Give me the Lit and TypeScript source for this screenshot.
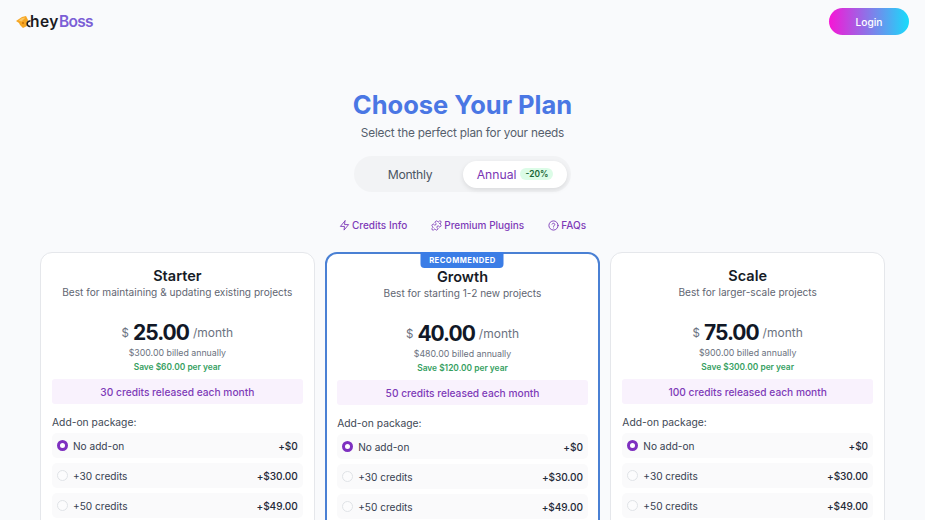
import { LitElement, html, css, svg } from "lit";
import { customElement } from "lit/decorators.js";

const PLANS = [
  { name: "Starter", desc: "Best for maintaining & updating existing projects", price: "25.00", billed: "$300.00", save: "$60.00", credits: 30, rec: false },
  { name: "Growth", desc: "Best for starting 1-2 new projects", price: "40.00", billed: "$480.00", save: "$120.00", credits: 50, rec: true },
  { name: "Scale", desc: "Best for larger-scale projects", price: "75.00", billed: "$900.00", save: "$300.00", credits: 100, rec: false },
];
const ADDONS = [
  { label: "No add-on", price: "+$0", on: true },
  { label: "+30 credits", price: "+$30.00", on: false },
  { label: "+50 credits", price: "+$49.00", on: false },
];
const PUZZLE =
  "M19.439 7.85c-.049.322.059.648.289.878l1.568 1.568c.47.47.706 1.087.706 1.704s-.235 1.233-.706 1.704l-1.611 1.611a.98.98 0 0 1-.837.276c-.47-.07-.802-.48-.968-.925a2.501 2.501 0 1 0-3.214 3.214c.446.166.855.497.925.968a.979.979 0 0 1-.276.837l-1.61 1.61a2.404 2.404 0 0 1-1.705.707 2.402 2.402 0 0 1-1.704-.706l-1.568-1.568a1.026 1.026 0 0 0-.877-.29c-.493.074-.84.504-1.02.968a2.5 2.5 0 1 1-3.237-3.237c.464-.18.894-.527.967-1.02a1.026 1.026 0 0 0-.289-.877l-1.568-1.568A2.402 2.402 0 0 1 1.998 12c0-.617.236-1.234.706-1.704L4.23 8.77c.24-.24.581-.353.917-.303.515.077.877.528 1.073 1.01a2.5 2.5 0 1 0 3.259-3.259c-.482-.196-.933-.558-1.01-1.073-.05-.336.062-.676.303-.917l1.525-1.525A2.402 2.402 0 0 1 12 1.998c.617 0 1.234.236 1.704.706l1.568 1.568c.23.23.556.338.877.29.493-.074.84-.504 1.02-.968a2.5 2.5 0 1 1 3.237 3.237c-.464.18-.894.527-.967 1.02Z";

@customElement("app-root")
export class AppRoot extends LitElement {
  static styles = css`
    :host { display: block; height: 520px; overflow: hidden; background: #f9fafc; font-family: Inter, "Noto Sans", sans-serif; color: #111827; }
    .head { display: flex; justify-content: space-between; align-items: center; height: 43px; padding: 0 16px; }
    .logo { display: flex; align-items: center; font-size: 15.5px; font-weight: 600; color: #1b1b22; }
    .logo .hey { letter-spacing: 0.5px; }
    .logo b { font-weight: 600; color: #7b5fd6; letter-spacing: -0.7px; }
    .logo svg { display: block; margin-right: -1px; }
    .login { display: flex; align-items: center; justify-content: center; width: 80px; height: 27px; border-radius: 14px; font-size: 10.2px; font-weight: 500; color: #fff; background: linear-gradient(90deg, #f715d6, #17dcfb); }
    .intro { display: flex; flex-direction: column; align-items: center; padding-top: 44px; }
    h1 { margin: 0; height: 36px; font-size: 25.5px; line-height: 36px; font-weight: 700; color: #4a77e4; }
    .sub { height: 20px; line-height: 20px; font-size: 11.8px; letter-spacing: -0.2px; color: #565f6d; }
    .toggle { display: flex; align-items: center; gap: 3px; margin-top: 13px; width: 217px; height: 36px; box-sizing: border-box; padding: 0 3px; border-radius: 18px; background: #f2f3f5; }
    .tab { display: flex; align-items: center; justify-content: center; height: 27px; border-radius: 14px; font-size: 12.2px; font-weight: 400; }
    .m { width: 103px; box-sizing: border-box; padding-left: 3px; color: #4b5563; letter-spacing: -0.3px; }
    .a { width: 104px; gap: 4px; background: #fff; color: #7a35b3; box-shadow: 0 2px 5px rgba(0, 0, 0, 0.1); }
    .off { padding: 1px 5px; border-radius: 8px; background: #dcfce7; color: #166534; font-size: 8.4px; font-weight: 600; }
    .links { display: flex; justify-content: center; gap: 24px; margin-top: 24px; height: 18px; align-items: center; font-size: 10px; font-weight: 500; color: #7e3bb8; }
    .links span { display: flex; align-items: center; gap: 2px; }
    .cards { display: grid; grid-template-columns: repeat(3, 1fr); gap: 10.5px; margin-top: 18px; padding: 0 40px; }
    .card { position: relative; height: 320px; box-sizing: border-box; padding: 14px 11px 0; border: 1px solid #e5e7eb; border-radius: 12px; background: #fff; }
    .card.rec { border: 2px solid #4a80d4; padding: 14px 10px 0; }
    .badge { position: absolute; left: 50%; top: -2px; transform: translateX(-50%); width: 83px; height: 16px; display: flex; align-items: center; justify-content: center; border-radius: 0 0 4px 4px; background: #3b7de6; color: #fff; font-size: 7.6px; font-weight: 700; letter-spacing: 0.5px; }
    .name { text-align: center; font-size: 14.5px; line-height: 18px; font-weight: 600; color: #161b26; }
    .desc { margin-top: 0; text-align: center; font-size: 10.1px; line-height: 14px; color: #5f6672; }
    .price { display: flex; justify-content: center; align-items: center; margin-top: 21px; height: 26px; line-height: 26px; }
    .cur { font-size: 11.5px; color: #6b7280; margin-right: 4px; }
    .num { font-size: 21px; font-weight: 700; letter-spacing: -1px; color: #111827; }
    .per { font-size: 12px; color: #6b7280; margin-left: 4px; }
    .billed { margin-top: 0; text-align: center; font-size: 8.8px; line-height: 14px; color: #6b7280; }
    .save { margin-top: 1px; text-align: center; font-size: 8.4px; line-height: 13px; font-weight: 600; color: #35a05f; }
    .cred { margin-top: 5px; height: 25px; display: flex; align-items: center; justify-content: center; border-radius: 3px; background: #f9f2fd; color: #7e3bb8; font-size: 10.2px; font-weight: 500; }
    .addh { margin-top: 11px; font-size: 10.3px; line-height: 14px; color: #414955; }
    .opts { display: flex; flex-direction: column; gap: 5px; margin-top: 4px; }
    .opt { display: flex; align-items: center; justify-content: space-between; height: 25px; padding: 0 5px; border-radius: 5px; background: #fafafb; font-size: 10.1px; color: #374151; }
    .opt > span { display: flex; align-items: center; gap: 5px; }
    .opt b { font-weight: 500; color: #1f2937; letter-spacing: -0.1px; }
    .r { width: 11px; height: 11px; box-sizing: border-box; border-radius: 50%; border: 1px solid #e0e3e7; background: #fcfcfd; }
    .r.on { border: 3px solid #7e30c0; background: #fff; }
  `;

  private icon(d: ReturnType<typeof svg>) {
    return html`<svg width="11" height="11" viewBox="0 0 24 24" fill="none" stroke="currentColor" stroke-width="2" stroke-linecap="round" stroke-linejoin="round">${d}</svg>`;
  }

  render() {
    return html`
      <div class="head">
        <div class="logo">
          <svg width="15" height="14" viewBox="0 0 15 14">
            <path d="M0 6 L6 2 L10 1 L12 5 L11 11 L7 13 L4 10 L3 8 Z" fill="#f6a623" />
            <path d="M2.5 5.5 L6 3 L9.5 2.5 L5.5 6.5 Z" fill="#fbc766" />
            <circle cx="7" cy="8" r="1" fill="#c9720a" />
            <path d="M14.5 6 A2.8 2.8 0 1 0 14.5 11.5" fill="none" stroke="#1b1b22" stroke-width="1.6" />
          </svg>
          <span class="hey">hey<b>Boss</b></span>
        </div>
        <div class="login">Login</div>
      </div>
      <div class="intro">
        <h1>Choose Your Plan</h1>
        <div class="sub">Select the perfect plan for your needs</div>
        <div class="toggle">
          <div class="tab m">Monthly</div>
          <div class="tab a">Annual <span class="off">-20%</span></div>
        </div>
        <div class="links">
          <span>${this.icon(svg`<path d="M13 2 3 14h9l-1 8 10-12h-9l1-8z" />`)}Credits Info</span>
          <span>${this.icon(svg`<path d="${PUZZLE}" />`)}Premium Plugins</span>
          <span>${this.icon(svg`<circle cx="12" cy="12" r="10" /><path d="M9 9a3 3 0 0 1 5.8 1c0 2-3 2.5-3 4" /><path d="M12 17.5h.01" />`)}FAQs</span>
        </div>
      </div>
      <div class="cards">
        ${PLANS.map(
          (p) => html`
            <div class="card ${p.rec ? "rec" : ""}">
              ${p.rec ? html`<div class="badge">RECOMMENDED</div>` : ""}
              <div class="name">${p.name}</div>
              <div class="desc">${p.desc}</div>
              <div class="price"><span class="cur">$</span><span class="num">${p.price}</span><span class="per">/month</span></div>
              <div class="billed">${p.billed} billed annually</div>
              <div class="save">Save ${p.save} per year</div>
              <div class="cred">${p.credits} credits released each month</div>
              <div class="addh">Add-on package:</div>
              <div class="opts">
                ${ADDONS.map(
                  (a) => html`<div class="opt"><span><i class="r ${a.on ? "on" : ""}"></i>${a.label}</span><b>${a.price}</b></div>`
                )}
              </div>
            </div>
          `
        )}
      </div>
    `;
  }
}
